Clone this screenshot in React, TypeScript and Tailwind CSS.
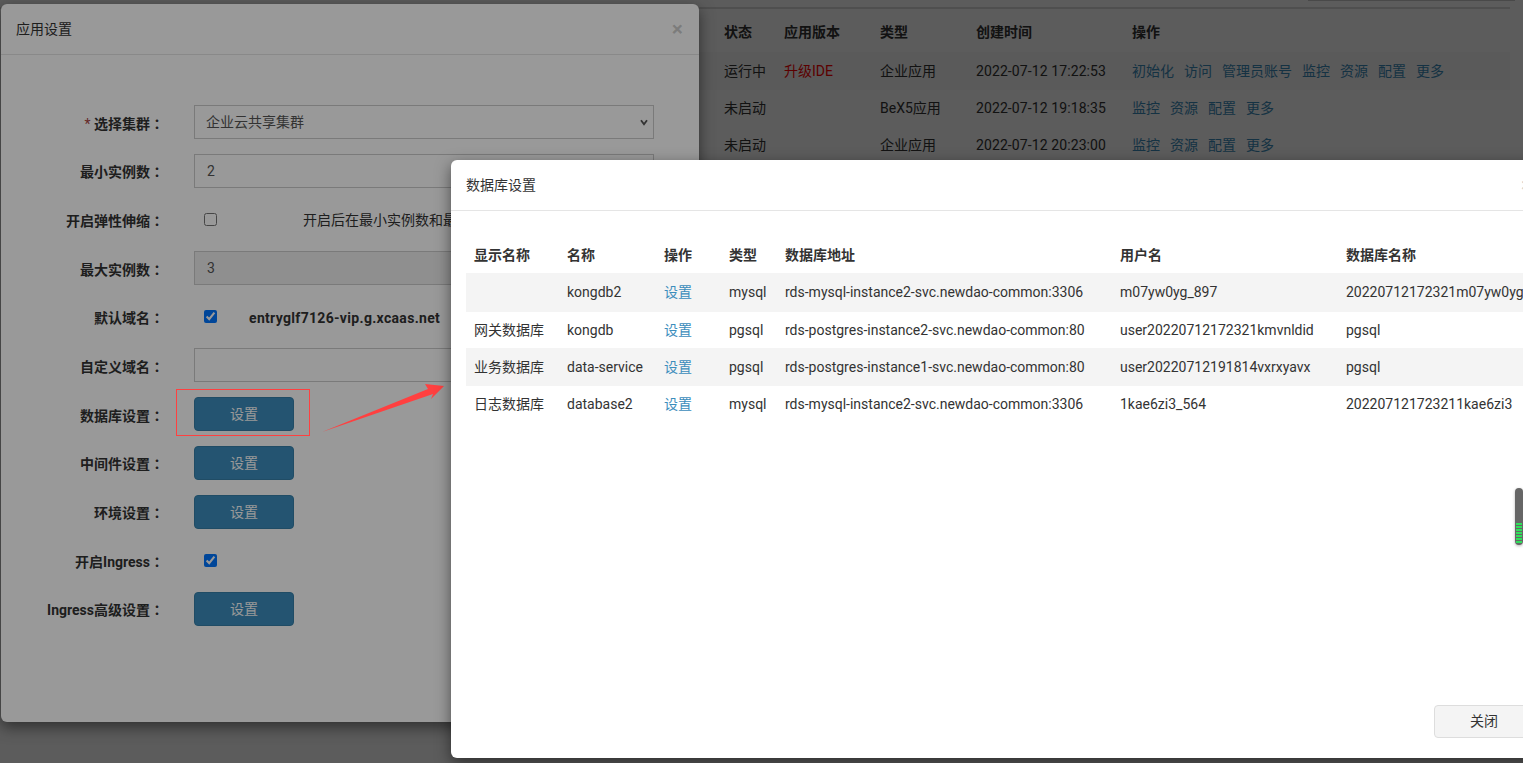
import React from "react";

const apps = [
  { status: "运行中", version: "升级IDE", type: "企业应用", time: "2022-07-12 17:22:53", ops: ["初始化", "访问", "管理员账号", "监控", "资源", "配置", "更多"] },
  { status: "未启动", version: "", type: "BeX5应用", time: "2022-07-12 19:18:35", ops: ["监控", "资源", "配置", "更多"] },
  { status: "未启动", version: "", type: "企业应用", time: "2022-07-12 20:23:00", ops: ["监控", "资源", "配置", "更多"] },
];

const databases = [
  { show: "", name: "kongdb2", type: "mysql", addr: "rds-mysql-instance2-svc.newdao-common:3306", user: "m07yw0yg_897", db: "20220712172321m07yw0yg", h: "h-[39px] bg-[#f4f4f4]" },
  { show: "网关数据库", name: "kongdb", type: "pgsql", addr: "rds-postgres-instance2-svc.newdao-common:80", user: "user20220712172321kmvnldid", db: "pgsql", h: "h-[36px]" },
  { show: "业务数据库", name: "data-service", type: "pgsql", addr: "rds-postgres-instance1-svc.newdao-common:80", user: "user20220712191814vxrxyavx", db: "pgsql", h: "h-[38px] bg-[#f4f4f4]" },
  { show: "日志数据库", name: "database2", type: "mysql", addr: "rds-mysql-instance2-svc.newdao-common:3306", user: "1kae6zi3_564", db: "202207121723211kae6zi3", h: "h-[37px]" },
];

function Row({ label, children }: { label: React.ReactNode; children: React.ReactNode }) {
  return (
    <div className="flex h-[34px] items-center">
      <label className="w-[163px] shrink-0 pt-[3px] text-right font-bold text-[#333]">
        {label}
        <span className="font-['Noto_Sans_CJK_TC',sans-serif]">：</span>
      </label>
      <div className="ml-[30px] flex h-full w-[460px] items-center">{children}</div>
    </div>
  );
}

function SetButton() {
  return (
    <button className="h-[34px] w-[100px] rounded-[4px] border border-[#367fa9] bg-[#3c8dbc] pt-[1px] text-white">设置</button>
  );
}

const inputCls = "h-[34px] w-full border border-[#ccc] px-[12px] text-[#555] outline-none";

export default function App() {
  return (
    <div className="relative h-[763px] w-[1523px] overflow-hidden bg-white font-['Roboto','Noto_Sans_CJK_SC',sans-serif] text-[14px] text-[#333]">
      {/* page behind the dialogs */}
      <div className="w-[1510px]">
        <div className="ml-[1308px] h-[1px] w-[207px] bg-[#ccc]" />
        <div className="mt-[6px] h-[2px] bg-[#ddd]" />
        <div className="grid h-[43px] grid-cols-[60px_96px_96px_156px_1fr] items-center pl-[724px] pt-[4px] font-bold">
          <span>状态</span>
          <span>应用版本</span>
          <span>类型</span>
          <span>创建时间</span>
          <span>操作</span>
        </div>
        {apps.map((a, i) => (
          <div
            key={a.time}
            className={
              i == 0
                ? "grid h-[38px] grid-cols-[60px_96px_96px_156px_1fr] items-center bg-[#fafafa] pl-[724px]"
                : "grid h-[37px] grid-cols-[60px_96px_96px_156px_1fr] items-center pl-[724px]"
            }
          >
            <span>{a.status}</span>
            <span className="text-[#f00]">{a.version}</span>
            <span>{a.type}</span>
            <span className="tracking-[0.1px]">{a.time}</span>
            <span className="flex gap-[10px] text-[#3c8dbc]">
              {a.ops.map((op) => (
                <a key={op}>{op}</a>
              ))}
            </span>
          </div>
        ))}
      </div>

      <div className="absolute inset-0 bg-black/40" />

      {/* app settings dialog */}
      <div className="absolute left-[1px] top-[4px] h-[718px] w-[698px] rounded-[6px] bg-white shadow-[0_5px_15px_rgba(0,0,0,0.5)]">
        <div className="flex h-[51px] items-center justify-between border-b border-[#e5e5e5] pl-[15px] pr-[16px]">
          <span>应用设置</span>
          <span className="text-[21px] font-bold leading-none text-black/20">×</span>
        </div>
        <div className="flex flex-col gap-[14.7px] pt-[50px]">
          <Row label={<><span className="font-normal text-[#a94442]">* </span>选择集群</>}>
            <div className="relative w-full">
              <select className={`${inputCls} appearance-none bg-white pl-[11px]`}>
                <option>企业云共享集群</option>
              </select>
              <svg className="absolute right-[6px] top-[14px]" width="8" height="7" viewBox="0 0 8 7" fill="none">
                <path d="M1 1.2 L4 5.2 L7 1.2" stroke="#555" strokeWidth="1.8" />
              </svg>
            </div>
          </Row>
          <Row label="最小实例数">
            <input className={`${inputCls} bg-white`} defaultValue="2" />
          </Row>
          <Row label="开启弹性伸缩">
            <input type="checkbox" className="ml-[10px] h-[13px] w-[13px]" />
            <span className="ml-[86px] whitespace-nowrap pt-[2px]">开启后在最小实例数和最大实例数之间弹性伸缩</span>
          </Row>
          <Row label="最大实例数">
            <input className={`${inputCls} bg-[#eee]`} defaultValue="3" disabled />
          </Row>
          <Row label="默认域名">
            <input type="checkbox" defaultChecked className="ml-[10px] h-[13px] w-[13px]" />
            <span className="ml-[32px] pt-[3px] font-bold tracking-[0.32px]">entryglf7126-vip.g.xcaas.net</span>
          </Row>
          <Row label="自定义域名">
            <input className={`${inputCls} bg-white`} />
          </Row>
          <Row label="数据库设置">
            <SetButton />
          </Row>
          <Row label="中间件设置">
            <SetButton />
          </Row>
          <Row label="环境设置">
            <SetButton />
          </Row>
          <Row label="开启Ingress">
            <input type="checkbox" defaultChecked className="ml-[10px] h-[13px] w-[13px]" />
          </Row>
          <Row label="Ingress高级设置">
            <SetButton />
          </Row>
        </div>
      </div>

      <div className="absolute inset-0 bg-black/40" />

      {/* annotation drawn on the screenshot */}
      <div className="absolute left-[176px] top-[389px] h-[47px] w-[134px] border border-[#ff4040]" />
      <svg className="absolute left-[320px] top-[380px]" width="130" height="55" viewBox="320 380 130 55">
        <polygon points="322,432 428,389 425,384 444,386 431,399 433,394" fill="#ff4040" />
      </svg>

      {/* database settings dialog */}
      <div className="absolute left-[451px] top-[160px] flex h-[598px] w-[1100px] flex-col rounded-[6px] bg-white shadow-[0_5px_15px_rgba(0,0,0,0.5)]">
        <div className="flex h-[51px] shrink-0 items-center border-b border-[#e5e5e5] px-[15px]">
          <span className="shrink-0 whitespace-nowrap">数据库设置</span>
          <span className="ml-[985px] shrink-0 text-[21px] font-bold leading-none text-black/20">×</span>
        </div>
        <div className="pl-[15px] pt-[25px]">
          <table className="w-[1122px] table-fixed">
            <colgroup>
              <col className="w-[93px]" />
              <col className="w-[97px]" />
              <col className="w-[65px]" />
              <col className="w-[56px]" />
              <col className="w-[335px]" />
              <col className="w-[226px]" />
              <col />
            </colgroup>
            <thead>
              <tr className="h-[37px] text-left">
                {["显示名称", "名称", "操作", "类型", "数据库地址", "用户名", "数据库名称"].map((h) => (
                  <th key={h} className="px-[8px] pt-[2px] font-bold">{h}</th>
                ))}
              </tr>
            </thead>
            <tbody>
              {databases.map((d) => (
                <tr key={d.name} className={d.h}>
                  <td className="px-[8px]">{d.show}</td>
                  <td className="whitespace-nowrap px-[8px]">{d.name}</td>
                  <td className="px-[8px] text-[#3c8dbc]"><a>设置</a></td>
                  <td className="px-[8px]">{d.type}</td>
                  <td className="whitespace-nowrap px-[8px]">{d.addr}</td>
                  <td className="whitespace-nowrap px-[8px]">{d.user}</td>
                  <td className="whitespace-nowrap px-[8px]">{d.db}</td>
                </tr>
              ))}
            </tbody>
          </table>
        </div>
        <div className="mt-auto flex justify-end pb-[20px] pr-[17px]">
          <button className="h-[33px] w-[100px] rounded-[4px] border border-[#ddd] bg-[#f4f4f4] text-[#333]">关闭</button>
        </div>
      </div>

      {/* floating widget stuck to the right edge */}
      <div className="absolute left-[1515px] top-[488px] flex h-[57px] w-[8px] flex-col justify-end gap-[1px] rounded-[4px] bg-[#666] px-[1px] pb-[2px] shadow-[0_1px_3px_rgba(0,0,0,0.3)]">
        {[0, 1, 2, 3, 4, 5, 6].map((i) => (
          <div key={i} className="h-[2px] bg-[#2ee05a]" />
        ))}
      </div>
    </div>
  );
}
